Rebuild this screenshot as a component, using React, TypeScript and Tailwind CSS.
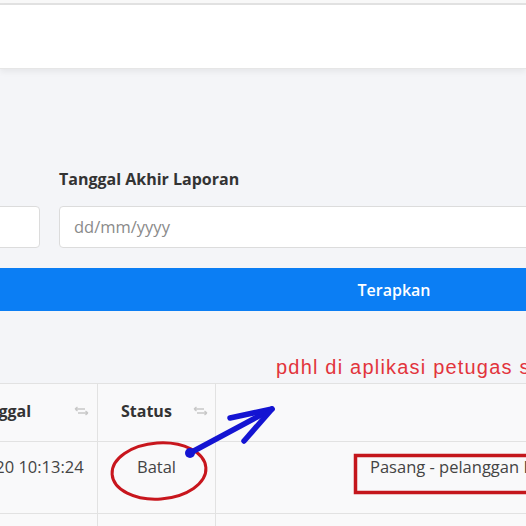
import React from 'react'

function SortIcon() {
  return (
    <svg width="15" height="10" viewBox="0 0 15 10" fill="none" stroke="#c8c8c8" strokeWidth="1.3">
      <path d="M1 3h10M1 3l2.5-2M1 3l2.5 2" />
      <path d="M14 7H4M14 7l-2.5-2M14 7l-2.5 2" />
    </svg>
  )
}

function Annotations() {
  return (
    <svg className="absolute left-0 top-0 pointer-events-none" width="526" height="526" viewBox="0 0 526 526">
      <ellipse cx="159" cy="471" rx="47" ry="28" fill="none" stroke="#c8161d" strokeWidth="3" transform="rotate(-4 159 471)" />
      <rect x="355.5" y="455.5" width="180" height="37" fill="none" stroke="#c4161c" strokeWidth="3.5" />
      <g stroke="#1414d2" strokeWidth="5.5" strokeLinecap="round" fill="none">
        <path d="M190 453 L270 410" />
        <path d="M230 418 L272 409" />
        <path d="M244 441 L272 409" />
      </g>
      <circle cx="190" cy="453" r="5" fill="#1414d2" />
    </svg>
  )
}

export default function App() {
  return (
    <div className="relative w-[526px] h-[526px] overflow-hidden bg-[#f4f5f8] font-['Open_Sans',sans-serif]">
      <div className="h-[5px] bg-[#f8f8f8] border-b-2 border-[#e2e2e2]" />
      <div className="h-[64px] bg-white shadow-[0_3px_6px_rgba(0,0,0,0.06)] border-b border-[#e6e6e6]" />

      <div className="-ml-[300px] w-[1388px]">
        <div className="flex gap-[19px] pt-[98px]">
          <div className="w-[340px] flex flex-col">
            <div className="h-[39px]" />
            <div className="h-[42px] bg-white border border-[#dcdcdc] rounded-[4px]" />
          </div>
          <div className="flex-1 flex flex-col">
            <div className="h-[39px] text-[16px] font-bold text-[#333] leading-[24px]">Tanggal Akhir Laporan</div>
            <div className="h-[42px] bg-white border border-[#dcdcdc] rounded-[4px] flex items-center pl-[14px] text-[16.5px] text-[#8a8a8a]">
              dd/mm/yyyy
            </div>
          </div>
        </div>

        <div className="mt-[20px] h-[43px] bg-[#0b7ef4] rounded-[3px] flex items-center justify-center text-white text-[16px] font-semibold">
          Terapkan
        </div>

        <div className="mt-[72px] bg-[#f9f9fa] border-t border-[#e2e2e2]">
          <div className="flex h-[58px] border-b border-[#e2e2e2] text-[16px] font-bold text-[#333]">
            <div className="w-[398px] flex items-center justify-between pl-[269px] pr-[8px] pb-[4px] border-r border-[#e2e2e2]">
              <span>Tanggal</span>
              <SortIcon />
            </div>
            <div className="w-[118px] flex items-center gap-[21px] pl-[23px] pb-[4px] border-r border-[#e2e2e2]">
              <span>Status</span>
              <SortIcon />
            </div>
            <div className="flex-1" />
          </div>
          <div className="flex h-[72px] border-b border-[#e2e2e2] text-[16.5px] text-[#444]">
            <div className="w-[398px] flex items-center pl-[228px] pb-[20px] border-r border-[#e2e2e2]">
              2021-01-20 10:13:24
            </div>
            <div className="w-[118px] flex items-center justify-center pb-[20px] border-r border-[#e2e2e2]">
              Batal
            </div>
            <div className="flex-1 flex items-center pl-[154px] pb-[20px]">
              Pasang - pelanggan Baru
            </div>
          </div>
          <div className="flex h-[20px]">
            <div className="w-[398px] border-r border-[#e2e2e2]" />
            <div className="w-[118px] border-r border-[#e2e2e2]" />
          </div>
        </div>
      </div>

      <div className="absolute left-[276px] top-[352px] text-[20px] text-[#e2343c] font-['Liberation_Sans',sans-serif] tracking-[1.2px] whitespace-nowrap">
        pdhl di aplikasi petugas status
      </div>
      <Annotations />
    </div>
  )
}
